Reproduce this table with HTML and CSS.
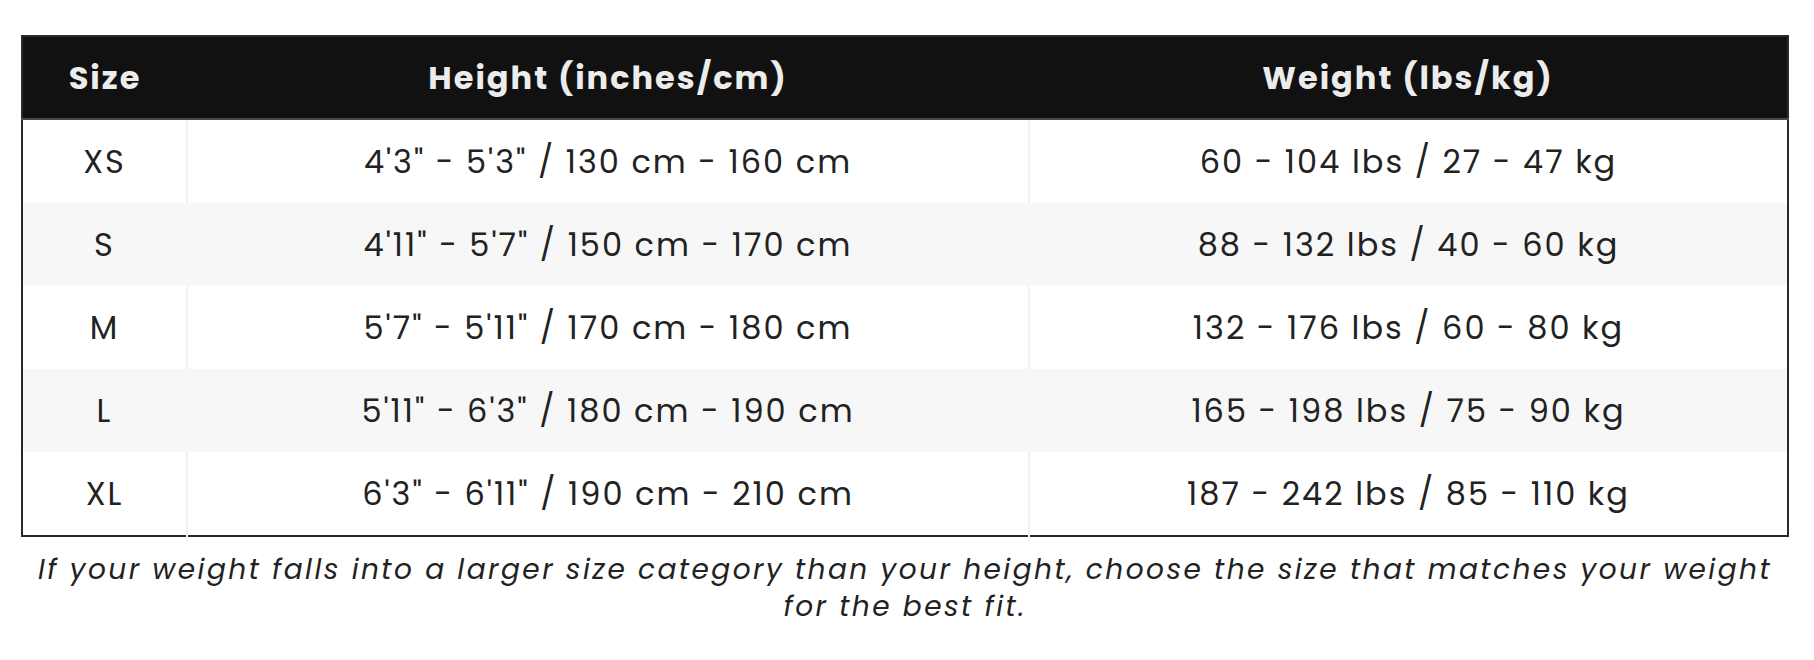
FILE: index.html
```html
<!DOCTYPE html>
<html lang="en">
<head>
<meta charset="utf-8">
<title>Size Chart</title>
<link rel="stylesheet" href="styles.css">
</head>
<body>
<div class="wrap">
  <table class="chart">
    <colgroup>
      <col class="c1">
      <col class="c2">
      <col class="c3">
    </colgroup>
    <thead>
      <tr>
        <th>Size</th>
        <th>Height (inches/cm)</th>
        <th>Weight (lbs/kg)</th>
      </tr>
    </thead>
    <tbody>
      <tr><td>XS</td><td>4'3" - 5'3" / 130 cm - 160 cm</td><td>60 - 104 lbs / 27 - 47 kg</td></tr>
      <tr><td>S</td><td>4'11" - 5'7" / 150 cm - 170 cm</td><td>88 - 132 lbs / 40 - 60 kg</td></tr>
      <tr><td>M</td><td>5'7" - 5'11" / 170 cm - 180 cm</td><td>132 - 176 lbs / 60 - 80 kg</td></tr>
      <tr><td>L</td><td>5'11" - 6'3" / 180 cm - 190 cm</td><td>165 - 198 lbs / 75 - 90 kg</td></tr>
      <tr><td>XL</td><td>6'3" - 6'11" / 190 cm - 210 cm</td><td>187 - 242 lbs / 85 - 110 kg</td></tr>
    </tbody>
  </table>
  <p class="note">If your weight falls into a larger size category than your height, choose the size that matches your weight for the best fit.</p>
</div>
</body>
</html>
```

FILE: styles.css
```css
html, body {
  margin: 0;
  padding: 0;
  background: #ffffff;
}

body {
  font-family: "Poppins", "Inter", "Open Sans", sans-serif;
  color: #222222;
}

.wrap {
  width: 1768px;
  padding: 35px 0 0 21px;
}

.chart {
  width: 1768px;
  border-collapse: collapse;
  table-layout: fixed;
  border: 2px solid #2a2a2a;
}

.c1 { width: 165px; }
.c2 { width: 842px; }
.c3 { width: auto; }

.chart th {
  background: #111111;
  color: #ececec;
  font-weight: 700;
  font-size: 32px;
  letter-spacing: 2px;
  height: 81px;
  padding: 0;
  text-align: center;
  border-bottom: 2px solid #4a4a4a;
}

.chart td {
  height: 83px;
  padding: 0;
  text-align: center;
  font-size: 32px;
  letter-spacing: 2px;
  color: #222222;
  border-left: 2px solid #f1f1f1;
}

.chart td:first-child {
  border-left: none;
}

.chart tbody tr:nth-child(even) td {
  background: #f7f7f7;
  border-left-color: #f7f7f7;
}

.note {
  margin: 14px 0 0 0;
  text-align: center;
  font-style: italic;
  font-size: 28px;
  line-height: 37px;
  letter-spacing: 2.45px;
  color: #222222;
}
```
